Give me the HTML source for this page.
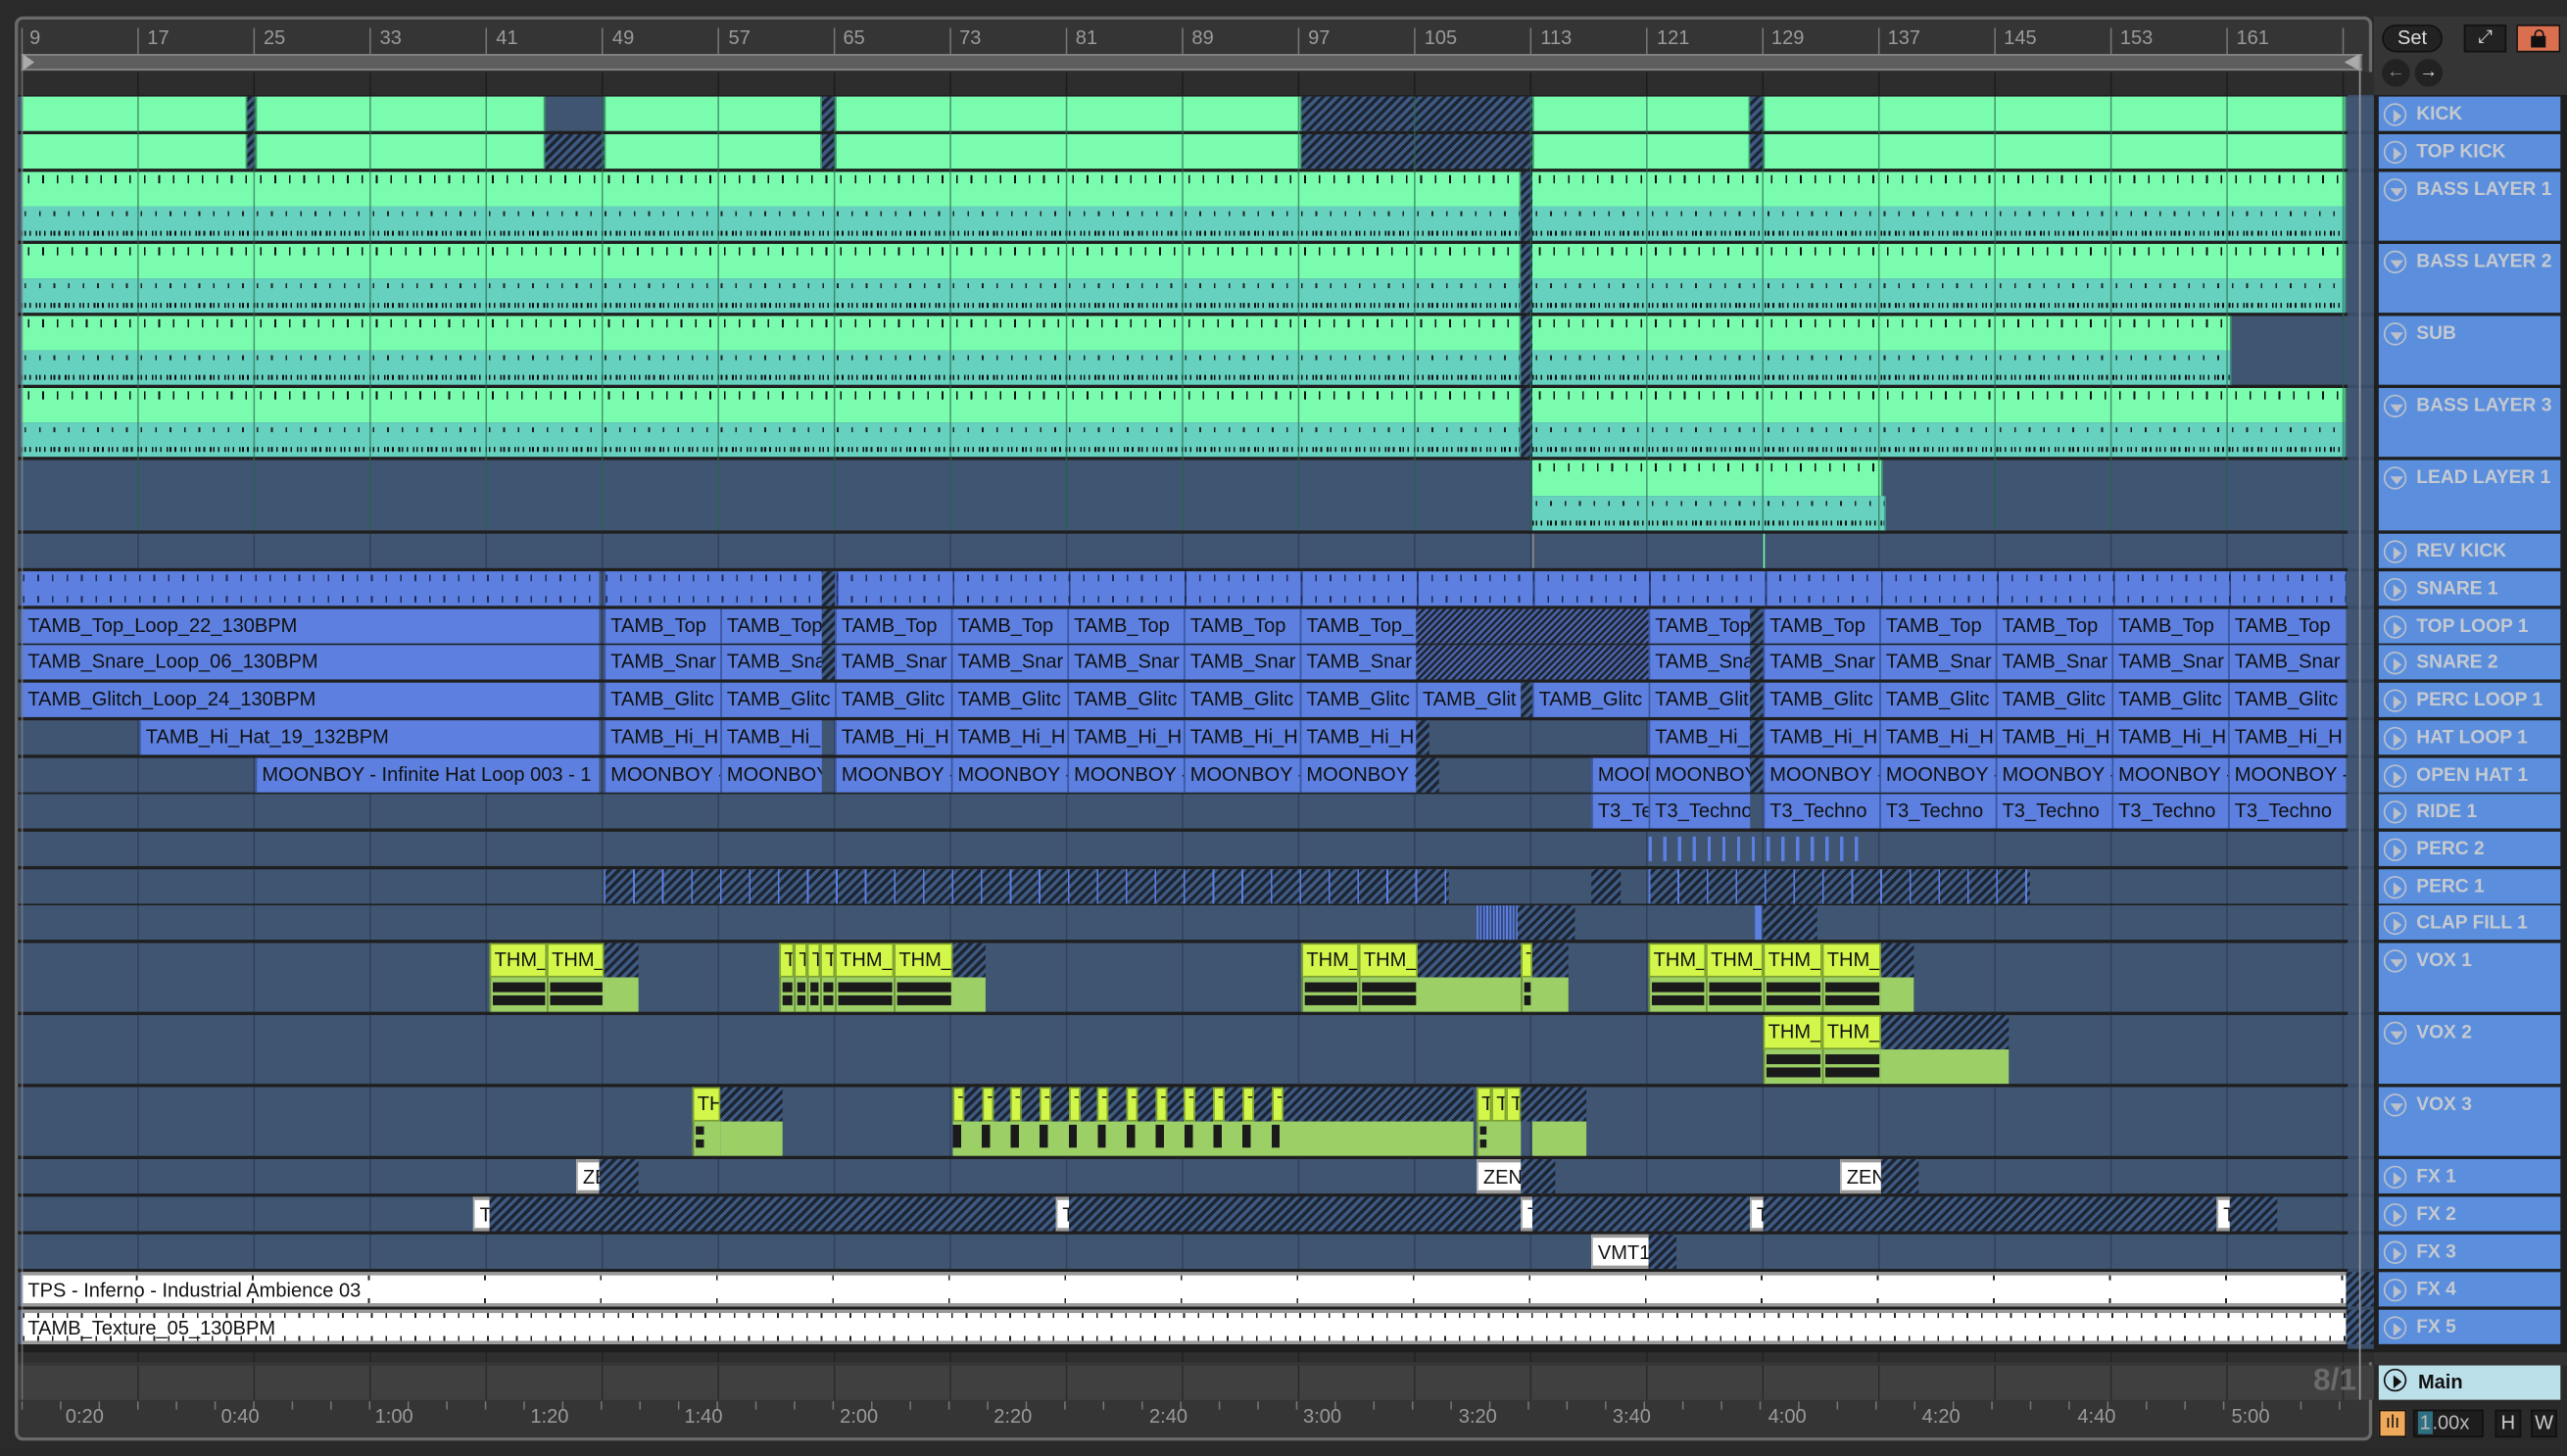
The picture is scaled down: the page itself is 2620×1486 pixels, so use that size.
<!DOCTYPE html>
<html><head><meta charset="utf-8">
<style>
html,body{margin:0;padding:0;background:#2a2a2a;width:2620px;height:1486px;overflow:hidden}
#w{position:absolute;left:0;top:0;width:1568px;height:889px;transform:scale(1.67092);transform-origin:0 0;font-family:"Liberation Sans",sans-serif;background:#2a2a2a}
.a{position:absolute;box-sizing:border-box;overflow:hidden;white-space:nowrap}
.t{position:absolute;left:11px;width:1439px;background-color:#405572;background-image:linear-gradient(90deg,rgba(20,30,45,.35) 1px,transparent 1px);background-size:70.9px 100%;background-position:2px 0}
.g{background:#7afcae;border-right:1px solid #3f9c6c;border-left:1px solid #3f9c6c}
.h{background:repeating-linear-gradient(-45deg,#1d2533 0 2px,#3e5a82 2px 4px)}
.hd{background:repeating-linear-gradient(-45deg,#1d2533 0 1.5px,#4a63a8 1.5px 3px)}
.b{background:#5c7fe0;border-left:1px solid #3c55a0;font-size:12px;color:#111;line-height:21px;padding-left:3px}
.tb{top:0;height:100%}
.gt{background:#7afcae;height:50%;top:0;border-right:1px solid #3f9c6c;background-image:repeating-linear-gradient(90deg,#111 0 1px,transparent 1px 8.86px);background-size:100% 5px;background-repeat:no-repeat;background-position:4px 2px}
.tl{background:#66d1bf;height:50%;top:50%;border-right:1px solid #3d8f86;background-image:repeating-linear-gradient(90deg,#222 0 1px,transparent 1px 8.86px),repeating-linear-gradient(90deg,#111 0 1px,transparent 1px 2px,#111 2px 3px,transparent 3px 5px,#111 5px 6px,transparent 6px 8.86px);background-size:100% 3px,100% 3px;background-repeat:no-repeat;background-position:2px 3px,0 15px}
.v{background:#d3f64b;height:50%;top:0;border:1px solid #7da230;font-size:12px;line-height:19px;padding-left:2px;color:#111}
.vb{background:#9ccf66;height:50%;top:50%;border-left:1px solid #6a8f3b;background-image:linear-gradient(#1a1a1a,#1a1a1a),linear-gradient(#1a1a1a,#1a1a1a);background-size:calc(100% - 2px) 6px,calc(100% - 2px) 6px;background-position:1px 3px,1px 11px;background-repeat:no-repeat}
.vg{background:#9ccf66;height:50%;top:50%}
.wc{background:#fff;border-top:2px solid #999;border-bottom:2px solid #999;border-left:1px solid #aaa;font-size:12px;line-height:18px;color:#111;padding-left:3px}
.lab{position:absolute;left:1453px;width:111px;background:#5b8fdd;color:#c4c9d1;font-weight:bold;font-size:11.5px;box-sizing:border-box;padding-left:23px;line-height:22px}
.lab:before{content:"";position:absolute;left:3px;top:4px;width:12px;height:12px;border:1.5px solid #b9c0cc;border-radius:50%}
.lab.p:after{content:"";position:absolute;left:9px;top:8px;border-left:5px solid #b9c0cc;border-top:4px solid transparent;border-bottom:4px solid transparent}
.lab.d:after{content:"";position:absolute;left:6.5px;top:10px;border-top:5px solid #b9c0cc;border-left:4px solid transparent;border-right:4px solid transparent}
.rn{position:absolute;top:16px;font-size:12px;color:#9a9a9a}
.tm{position:absolute;top:858px;font-size:12px;color:#9a9a9a}
</style></head><body><div id="w">
<div class="a" style="left:9px;top:10px;width:1440px;height:870px;border:2px solid #6a6a6a;border-radius:5px;background:#353535"></div>
<div class="a" style="left:13px;top:33px;width:1430px;height:10px;background:#5e5e5e;border-top:1px solid #888;border-bottom:1px solid #888"></div>
<div class="a" style="left:13px;top:44px;width:1436px;height:14px;background:#2d2d2d;background-image:linear-gradient(90deg,#1c1c1c 1px,transparent 1px);background-size:70.9px 100%;background-position:0 0"></div>
<div class="rn" style="left:18px">9</div><div class="rn" style="left:90px">17</div><div class="rn" style="left:161px">25</div><div class="rn" style="left:232px">33</div><div class="rn" style="left:303px">41</div><div class="rn" style="left:374px">49</div><div class="rn" style="left:445px">57</div><div class="rn" style="left:515px">65</div><div class="rn" style="left:586px">73</div><div class="rn" style="left:657px">81</div><div class="rn" style="left:728px">89</div><div class="rn" style="left:799px">97</div><div class="rn" style="left:870px">105</div><div class="rn" style="left:941px">113</div><div class="rn" style="left:1012px">121</div><div class="rn" style="left:1082px">129</div><div class="rn" style="left:1153px">137</div><div class="rn" style="left:1224px">145</div><div class="rn" style="left:1295px">153</div><div class="rn" style="left:1366px">161</div>
<div class="a" style="left:13px;top:17px;width:1430px;height:16px;background-image:linear-gradient(90deg,#888 1px,transparent 1px);background-size:70.9px 100%;opacity:.8"></div>
<div class="a" style="left:1432px;top:33px;width:0;height:0;border-right:9px solid #aaa;border-top:5px solid transparent;border-bottom:5px solid transparent"></div>
<div class="a" style="left:14px;top:33px;width:0;height:0;border-left:7px solid #aaa;border-top:5px solid transparent;border-bottom:5px solid transparent"></div>
<div class="a" style="left:1450px;top:10px;width:118px;height:48px;background:#353535"></div>
<div class="a" style="left:1455px;top:15px;width:37px;height:17px;border-radius:9px;background:#222;border:1px solid #111;color:#ddd;font-size:12px;text-align:center;line-height:15px">Set</div>
<div class="a" style="left:1505px;top:15px;width:26px;height:17px;background:#222;border:1px solid #111;color:#ddd;font-size:11px;text-align:center;line-height:15px">⤢</div>
<div class="a" style="left:1537px;top:15px;width:27px;height:17px;background:#d96f4e;border:1px solid #111"><div class="a" style="left:8px;top:6px;width:9px;height:7px;background:#111"></div><div class="a" style="left:9.5px;top:2px;width:6px;height:6px;border:1.5px solid #111;border-radius:4px 4px 0 0"></div></div>
<div class="a" style="left:1455px;top:36px;width:17px;height:17px;border-radius:50%;background:#222;color:#888;font-size:11px;text-align:center;line-height:17px">←</div>
<div class="a" style="left:1475px;top:36px;width:17px;height:17px;border-radius:50%;background:#222;color:#ddd;font-size:11px;text-align:center;line-height:17px">→</div>
<div class="a" style="left:11px;top:58px;width:1557px;height:766px;background:#1f1f1f"></div>
<div class="a" style="left:1434px;top:58px;width:16px;height:766px;background:#3a4d68"></div>

<div class="t" style="top:59px;height:21px">
<div class="a g tb" style="left:2px;width:138px"></div><div class="a h tb" style="left:140px;width:5px"></div>
<div class="a g tb" style="left:145px;width:177px"></div>
<div class="a g tb" style="left:358px;width:133px"></div><div class="a h tb" style="left:491px;width:8px"></div>
<div class="a g tb" style="left:499px;width:285px"></div><div class="a h tb" style="left:784px;width:141px"></div>
<div class="a g tb" style="left:925px;width:133px"></div><div class="a h tb" style="left:1058px;width:8px"></div>
<div class="a g tb" style="left:1066px;width:356px"></div></div>
<div class="t" style="top:82px;height:21px">
<div class="a g tb" style="left:2px;width:138px"></div><div class="a h tb" style="left:140px;width:5px"></div>
<div class="a g tb" style="left:145px;width:177px"></div><div class="a h tb" style="left:322px;width:36px"></div>
<div class="a g tb" style="left:358px;width:133px"></div><div class="a h tb" style="left:491px;width:8px"></div>
<div class="a g tb" style="left:499px;width:285px"></div><div class="a h tb" style="left:784px;width:141px"></div>
<div class="a g tb" style="left:925px;width:133px"></div><div class="a h tb" style="left:1058px;width:8px"></div>
<div class="a g tb" style="left:1066px;width:356px"></div></div>
<div class="t" style="top:105px;height:42px"><div class="a gt" style="left:2px;width:916px"></div><div class="a tl" style="left:2px;width:916px"></div><div class="a h tb" style="left:918px;width:7px"></div><div class="a gt" style="left:925px;width:497px"></div><div class="a tl" style="left:925px;width:497px"></div></div>
<div class="t" style="top:149px;height:42px"><div class="a gt" style="left:2px;width:916px"></div><div class="a tl" style="left:2px;width:916px"></div><div class="a h tb" style="left:918px;width:7px"></div><div class="a gt" style="left:925px;width:497px"></div><div class="a tl" style="left:925px;width:497px"></div></div>
<div class="t" style="top:193px;height:42px"><div class="a gt" style="left:2px;width:916px"></div><div class="a tl" style="left:2px;width:916px"></div><div class="a h tb" style="left:918px;width:7px"></div><div class="a gt" style="left:925px;width:427px"></div><div class="a tl" style="left:925px;width:427px"></div></div>
<div class="t" style="top:237px;height:42px"><div class="a gt" style="left:2px;width:916px"></div><div class="a tl" style="left:2px;width:916px"></div><div class="a h tb" style="left:918px;width:7px"></div><div class="a gt" style="left:925px;width:497px"></div><div class="a tl" style="left:925px;width:497px"></div></div>
<div class="t" style="top:281px;height:43px"><div class="a gt" style="left:925px;width:214px"></div><div class="a tl" style="left:925px;width:216px"></div></div>
<!-- bar lines overlay for green rows -->
<div class="a" style="left:13px;top:59px;width:1420px;height:265px;background-image:linear-gradient(90deg,rgba(40,110,80,.7) 1px,transparent 1px);background-size:70.9px 100%;background-position:0 0;pointer-events:none"></div>
<div class="t" style="top:326px;height:21px"><div class="a" style="left:925px;top:0;width:1px;height:21px;background:#888"></div><div class="a" style="left:1066px;top:0;width:1px;height:21px;background:#7afcae"></div></div>
<div class="t" style="top:349px;height:21px">
<div class="a b tb" style="left:2px;width:353px;background-image:repeating-linear-gradient(90deg,#1c2a55 0 1px,transparent 1px 8.86px),repeating-linear-gradient(90deg,#1c2a55 0 1px,transparent 1px 8.86px);background-size:100% 4px,100% 4px;background-repeat:no-repeat;background-position:0 2px,0 15px"></div>
<div class="a b tb" style="left:358px;width:133px;background-image:repeating-linear-gradient(90deg,#1c2a55 0 1px,transparent 1px 8.86px),repeating-linear-gradient(90deg,#1c2a55 0 1px,transparent 1px 8.86px);background-size:100% 4px,100% 4px;background-repeat:no-repeat;background-position:0 2px,0 15px"></div>
<div class="a h tb" style="left:491px;width:8px"></div>
<div class="a b tb" style="left:499px;width:923px;background-image:repeating-linear-gradient(90deg,#1c2a55 0 1px,transparent 1px 8.86px),repeating-linear-gradient(90deg,#1c2a55 0 1px,transparent 1px 8.86px),repeating-linear-gradient(90deg,#2c3f7a 0 1px,transparent 1px 70.9px);background-size:100% 4px,100% 4px,100% 100%;background-repeat:no-repeat;background-position:0 2px,0 15px,0 0"></div></div>
<div class="t" style="top:372px;height:21px">
<div class="a b tb" style="left:2px;width:353px">TAMB_Top_Loop_22_130BPM</div>
<div class="a b tb" style="left:358px;width:71px">TAMB_Top</div><div class="a b tb" style="left:429px;width:62px">TAMB_Top</div><div class="a h tb" style="left:491px;width:8px"></div>
<div class="a b tb" style="left:499px;width:71px">TAMB_Top</div><div class="a b tb" style="left:570px;width:71px">TAMB_Top</div><div class="a b tb" style="left:641px;width:71px">TAMB_Top</div><div class="a b tb" style="left:712px;width:71px">TAMB_Top</div><div class="a b tb" style="left:783px;width:71px">TAMB_Top_</div>
<div class="a hd tb" style="left:854px;width:142px"></div>
<div class="a b tb" style="left:996px;width:62px">TAMB_Top</div><div class="a h tb" style="left:1058px;width:8px"></div>
<div class="a b tb" style="left:1066px;width:71px">TAMB_Top</div><div class="a b tb" style="left:1137px;width:71px">TAMB_Top</div><div class="a b tb" style="left:1208px;width:71px">TAMB_Top</div><div class="a b tb" style="left:1279px;width:71px">TAMB_Top</div><div class="a b tb" style="left:1350px;width:72px">TAMB_Top</div></div>
<div class="t" style="top:394px;height:21px">
<div class="a b tb" style="left:2px;width:353px">TAMB_Snare_Loop_06_130BPM</div>
<div class="a b tb" style="left:358px;width:71px">TAMB_Snar</div><div class="a b tb" style="left:429px;width:62px">TAMB_Sna</div><div class="a h tb" style="left:491px;width:8px"></div>
<div class="a b tb" style="left:499px;width:71px">TAMB_Snar</div><div class="a b tb" style="left:570px;width:71px">TAMB_Snar</div><div class="a b tb" style="left:641px;width:71px">TAMB_Snar</div><div class="a b tb" style="left:712px;width:71px">TAMB_Snar</div><div class="a b tb" style="left:783px;width:71px">TAMB_Snar</div>
<div class="a hd tb" style="left:854px;width:142px"></div>
<div class="a b tb" style="left:996px;width:62px">TAMB_Sna</div><div class="a h tb" style="left:1058px;width:8px"></div>
<div class="a b tb" style="left:1066px;width:71px">TAMB_Snar</div><div class="a b tb" style="left:1137px;width:71px">TAMB_Snar</div><div class="a b tb" style="left:1208px;width:71px">TAMB_Snar</div><div class="a b tb" style="left:1279px;width:71px">TAMB_Snar</div><div class="a b tb" style="left:1350px;width:72px">TAMB_Snar</div></div>
<div class="t" style="top:417px;height:21px">
<div class="a b tb" style="left:2px;width:353px">TAMB_Glitch_Loop_24_130BPM</div>
<div class="a b tb" style="left:358px;width:71px">TAMB_Glitc</div><div class="a b tb" style="left:429px;width:70px">TAMB_Glitc</div>
<div class="a b tb" style="left:499px;width:71px">TAMB_Glitc</div><div class="a b tb" style="left:570px;width:71px">TAMB_Glitc</div><div class="a b tb" style="left:641px;width:71px">TAMB_Glitc</div><div class="a b tb" style="left:712px;width:71px">TAMB_Glitc</div><div class="a b tb" style="left:783px;width:71px">TAMB_Glitc</div><div class="a b tb" style="left:854px;width:64px">TAMB_Glit</div>
<div class="a h tb" style="left:918px;width:7px"></div>
<div class="a b tb" style="left:925px;width:71px">TAMB_Glitc</div><div class="a b tb" style="left:996px;width:62px">TAMB_Glit</div><div class="a h tb" style="left:1058px;width:8px"></div>
<div class="a b tb" style="left:1066px;width:71px">TAMB_Glitc</div><div class="a b tb" style="left:1137px;width:71px">TAMB_Glitc</div><div class="a b tb" style="left:1208px;width:71px">TAMB_Glitc</div><div class="a b tb" style="left:1279px;width:71px">TAMB_Glitc</div><div class="a b tb" style="left:1350px;width:72px">TAMB_Glitc</div></div>
<div class="t" style="top:440px;height:21px">
<div class="a b tb" style="left:74px;width:281px">TAMB_Hi_Hat_19_132BPM</div>
<div class="a b tb" style="left:358px;width:71px">TAMB_Hi_H</div><div class="a b tb" style="left:429px;width:62px">TAMB_Hi_</div>
<div class="a b tb" style="left:499px;width:71px">TAMB_Hi_H</div><div class="a b tb" style="left:570px;width:71px">TAMB_Hi_H</div><div class="a b tb" style="left:641px;width:71px">TAMB_Hi_H</div><div class="a b tb" style="left:712px;width:71px">TAMB_Hi_H</div><div class="a b tb" style="left:783px;width:71px">TAMB_Hi_H</div><div class="a h tb" style="left:854px;width:8px"></div>
<div class="a b tb" style="left:996px;width:62px">TAMB_Hi_</div><div class="a h tb" style="left:1058px;width:8px"></div>
<div class="a b tb" style="left:1066px;width:71px">TAMB_Hi_H</div><div class="a b tb" style="left:1137px;width:71px">TAMB_Hi_H</div><div class="a b tb" style="left:1208px;width:71px">TAMB_Hi_H</div><div class="a b tb" style="left:1279px;width:71px">TAMB_Hi_H</div><div class="a b tb" style="left:1350px;width:72px">TAMB_Hi_H</div></div>
<div class="t" style="top:463px;height:21px">
<div class="a b tb" style="left:145px;width:210px">MOONBOY - Infinite Hat Loop 003 - 1</div>
<div class="a b tb" style="left:358px;width:71px">MOONBOY -</div><div class="a b tb" style="left:429px;width:62px">MOONBOY</div>
<div class="a b tb" style="left:499px;width:71px">MOONBOY -</div><div class="a b tb" style="left:570px;width:71px">MOONBOY -</div><div class="a b tb" style="left:641px;width:71px">MOONBOY -</div><div class="a b tb" style="left:712px;width:71px">MOONBOY -</div><div class="a b tb" style="left:783px;width:71px">MOONBOY -</div><div class="a h tb" style="left:854px;width:14px"></div>
<div class="a b tb" style="left:961px;width:35px">MOONBOY</div><div class="a b tb" style="left:996px;width:62px">MOONBOY</div><div class="a h tb" style="left:1058px;width:8px"></div>
<div class="a b tb" style="left:1066px;width:71px">MOONBOY -</div><div class="a b tb" style="left:1137px;width:71px">MOONBOY -</div><div class="a b tb" style="left:1208px;width:71px">MOONBOY -</div><div class="a b tb" style="left:1279px;width:71px">MOONBOY -</div><div class="a b tb" style="left:1350px;width:72px">MOONBOY -</div></div>
<div class="t" style="top:485px;height:21px">
<div class="a b tb" style="left:961px;width:35px">T3_Techno</div><div class="a b tb" style="left:996px;width:62px">T3_Techno</div>
<div class="a b tb" style="left:1066px;width:71px">T3_Techno</div><div class="a b tb" style="left:1137px;width:71px">T3_Techno</div><div class="a b tb" style="left:1208px;width:71px">T3_Techno</div><div class="a b tb" style="left:1279px;width:71px">T3_Techno</div><div class="a b tb" style="left:1350px;width:72px">T3_Techno</div></div>
<div class="t" style="top:508px;height:21px"><div class="a" style="left:996px;top:3px;width:128px;height:15px;background:repeating-linear-gradient(90deg,#5c7fe0 0 2px,transparent 2px 9px)"></div></div>
<div class="t" style="top:531px;height:21px"><div class="a h tb" style="left:358px;width:516px;background-image:repeating-linear-gradient(90deg,#5c7fe0 0 1px,transparent 1px 17.7px),repeating-linear-gradient(-45deg,#1d2533 0 2px,#3e5a82 2px 4px)"></div><div class="a h tb" style="left:961px;width:18px"></div><div class="a h tb" style="left:996px;width:233px;background-image:repeating-linear-gradient(90deg,#5c7fe0 0 1px,transparent 1px 17.7px),repeating-linear-gradient(-45deg,#1d2533 0 2px,#3e5a82 2px 4px)"></div></div>
<div class="t" style="top:553px;height:21px"><div class="a tb" style="left:891px;width:25px;background:repeating-linear-gradient(90deg,#5c7fe0 0 1px,#34487a 1px 2px)"></div><div class="a h tb" style="left:916px;width:35px"></div><div class="a h tb" style="left:1066px;width:33px"></div><div class="a tb" style="left:1061px;width:4px;background:#5c7fe0"></div></div>
<div class="t" style="top:576px;height:42px">
<div class="a v" style="left:288px;width:35px">THM_</div><div class="a vb" style="left:288px;width:35px"></div><div class="a v" style="left:323px;width:35px">THM_</div><div class="a vb" style="left:323px;width:35px"></div><div class="a h" style="left:358px;width:21px;top:0;height:50%"></div><div class="a vg" style="left:358px;width:21px"></div>
<div class="a v" style="left:465px;width:9px">T</div><div class="a vb" style="left:465px;width:9px"></div><div class="a v" style="left:474px;width:8px">T</div><div class="a vb" style="left:474px;width:8px"></div><div class="a v" style="left:482px;width:8px">T</div><div class="a vb" style="left:482px;width:8px"></div><div class="a v" style="left:490px;width:9px">T</div><div class="a vb" style="left:490px;width:9px"></div>
<div class="a v" style="left:499px;width:36px">THM_</div><div class="a vb" style="left:499px;width:36px"></div><div class="a v" style="left:535px;width:36px">THM_</div><div class="a vb" style="left:535px;width:36px"></div><div class="a h" style="left:571px;width:20px;top:0;height:50%"></div><div class="a vg" style="left:571px;width:20px"></div>
<div class="a v" style="left:784px;width:35px">THM_</div><div class="a vb" style="left:784px;width:35px"></div><div class="a v" style="left:819px;width:36px">THM_</div><div class="a vb" style="left:819px;width:36px"></div><div class="a h" style="left:855px;width:63px;top:0;height:50%"></div><div class="a vg" style="left:855px;width:63px"></div>
<div class="a v" style="left:918px;width:7px">T</div><div class="a vb" style="left:918px;width:7px"></div><div class="a h" style="left:925px;width:22px;top:0;height:50%"></div><div class="a vg" style="left:925px;width:22px"></div>
<div class="a v" style="left:996px;width:35px">THM_</div><div class="a vb" style="left:996px;width:35px"></div><div class="a v" style="left:1031px;width:35px">THM_</div><div class="a vb" style="left:1031px;width:35px"></div><div class="a v" style="left:1066px;width:36px">THM_</div><div class="a vb" style="left:1066px;width:36px"></div><div class="a v" style="left:1102px;width:36px">THM_</div><div class="a vb" style="left:1102px;width:36px"></div><div class="a h" style="left:1138px;width:20px;top:0;height:50%"></div><div class="a vg" style="left:1138px;width:20px"></div></div>
<div class="t" style="top:620px;height:42px">
<div class="a v" style="left:1066px;width:36px">THM_</div><div class="a vb" style="left:1066px;width:36px"></div><div class="a v" style="left:1102px;width:36px">THM_</div><div class="a vb" style="left:1102px;width:36px"></div><div class="a h" style="left:1138px;width:78px;top:0;height:50%"></div><div class="a vg" style="left:1138px;width:78px"></div></div>
<div class="t" style="top:664px;height:42px">
<div class="a v" style="left:412px;width:17px">TH</div><div class="a vb" style="left:412px;width:17px;background-size:5px 5px,5px 5px"></div><div class="a h" style="left:429px;width:38px;top:0;height:50%"></div><div class="a vg" style="left:429px;width:38px"></div>
<div class="a h" style="left:571px;width:318px;top:0;height:50%"></div><div class="a vg" style="left:571px;width:318px"></div>
<div class="a v" style="left:571px;width:7px">T</div><div class="a v" style="left:589px;width:7px">T</div><div class="a v" style="left:606px;width:7px">T</div><div class="a v" style="left:624px;width:7px">T</div><div class="a v" style="left:642px;width:7px">T</div><div class="a v" style="left:659px;width:7px">T</div><div class="a v" style="left:677px;width:7px">T</div><div class="a v" style="left:695px;width:7px">T</div><div class="a v" style="left:712px;width:7px">T</div><div class="a v" style="left:730px;width:7px">T</div><div class="a v" style="left:748px;width:7px">T</div><div class="a v" style="left:766px;width:7px">T</div>
<div class="a" style="left:571px;top:23px;width:202px;height:14px;background:repeating-linear-gradient(90deg,#1a1a1a 0 5px,transparent 5px 17.7px)"></div>
<div class="a v" style="left:891px;width:9px">T</div><div class="a v" style="left:900px;width:9px">T</div><div class="a v" style="left:909px;width:9px">T</div><div class="a vb" style="left:891px;width:27px;background-size:4px 5px,4px 5px"></div>
<div class="a h" style="left:918px;width:40px;top:0;height:50%"></div><div class="a vg" style="left:925px;width:33px"></div></div>
<div class="t" style="top:708px;height:21px"><div class="a wc tb" style="left:341px;width:14px">ZEN</div><div class="a h tb" style="left:355px;width:24px"></div><div class="a wc tb" style="left:891px;width:27px">ZEN</div><div class="a h tb" style="left:918px;width:21px"></div><div class="a wc tb" style="left:1113px;width:25px">ZEN</div><div class="a h tb" style="left:1138px;width:23px"></div></div>
<div class="t" style="top:731px;height:21px"><div class="a wc tb" style="left:278px;width:10px">T</div><div class="a h tb" style="left:288px;width:346px"></div><div class="a wc tb" style="left:634px;width:8px">T</div><div class="a h tb" style="left:642px;width:276px"></div><div class="a wc tb" style="left:918px;width:7px">T</div><div class="a h tb" style="left:925px;width:133px"></div><div class="a wc tb" style="left:1058px;width:8px">T</div><div class="a h tb" style="left:1066px;width:277px"></div><div class="a wc tb" style="left:1343px;width:8px">T</div><div class="a h tb" style="left:1351px;width:29px"></div></div>
<div class="t" style="top:754px;height:21px"><div class="a wc tb" style="left:961px;width:35px">VMT1</div><div class="a h tb" style="left:996px;width:17px"></div></div>
<div class="t" style="top:777px;height:21px"><div class="a wc tb" style="left:2px;width:1420px;background-image:repeating-linear-gradient(90deg,#222 0 1px,transparent 1px 70.9px),repeating-linear-gradient(90deg,#222 0 1px,transparent 1px 70.9px);background-size:100% 3px,100% 3px;background-repeat:no-repeat;background-position:69px 0,69px 14px">TPS - Inferno - Industrial Ambience 03</div><div class="a h tb" style="left:1422px;width:17px"></div></div>
<div class="t" style="top:800px;height:21px"><div class="a wc tb" style="left:2px;width:1420px;background-image:repeating-linear-gradient(90deg,#222 0 1px,transparent 1px 8.86px),repeating-linear-gradient(90deg,#222 0 1px,transparent 1px 8.86px);background-size:100% 3px,100% 3px;background-repeat:no-repeat;background-position:0 0,0 14px">TAMB_Texture_05_130BPM</div><div class="a h tb" style="left:1422px;width:17px"></div></div>
<div class="a" style="left:11px;top:824px;width:1439px;height:8px;background:#2f2f2f;background-image:linear-gradient(90deg,#222 1px,transparent 1px);background-size:70.9px 100%;background-position:2px 0"></div>
<div class="a" style="left:11px;top:834px;width:1439px;height:21px;background:#404040;background-image:linear-gradient(90deg,#2a2a2a 1px,transparent 1px);background-size:70.9px 100%;background-position:2px 0"></div>
<div class="a" style="left:1413px;top:833px;font-size:19px;font-weight:bold;color:#6a6a6a">8/1</div>
<div class="a" style="left:11px;top:824px;width:1557px;height:2px;background:#1f1f1f"></div>
<div class="a" style="left:1450px;top:826px;width:118px;height:8px;background:#333"></div>
<div class="a" style="left:1453px;top:834px;width:111px;height:21px;background:#bce0ea;color:#111;font-weight:bold;font-size:12px;line-height:21px;padding-left:24px">Main</div>
<div class="a" style="left:1456px;top:836px;width:14px;height:14px;border:1.5px solid #111;border-radius:50%"></div>
<div class="a" style="left:1462px;top:840px;border-left:5px solid #111;border-top:4px solid transparent;border-bottom:4px solid transparent"></div>
<div class="a" style="left:13px;top:856px;width:1430px;height:5px;background-image:linear-gradient(90deg,#777 1px,transparent 1px);background-size:23.6px 100%;background-position:0 0"></div>
<div class="tm" style="left:40px">0:20</div><div class="tm" style="left:135px">0:40</div><div class="tm" style="left:229px">1:00</div><div class="tm" style="left:324px">1:20</div><div class="tm" style="left:418px">1:40</div><div class="tm" style="left:513px">2:00</div><div class="tm" style="left:607px">2:20</div><div class="tm" style="left:702px">2:40</div><div class="tm" style="left:796px">3:00</div><div class="tm" style="left:891px">3:20</div><div class="tm" style="left:985px">3:40</div><div class="tm" style="left:1080px">4:00</div><div class="tm" style="left:1174px">4:20</div><div class="tm" style="left:1269px">4:40</div><div class="tm" style="left:1363px">5:00</div>
<div class="a" style="left:1453px;top:861px;width:17px;height:17px;background:#f0a95a;border:1px solid #111;font-size:11px;text-align:center;line-height:15px;color:#111">ılı</div>
<div class="a" style="left:1474px;top:861px;width:43px;height:17px;background:#1d1d1d;border:1px solid #111;color:#bbb;font-size:12px;line-height:15px;padding-left:2px"><span style="background:#2f6f82;padding:0 1px">1</span>.00x</div>
<div class="a" style="left:1524px;top:861px;width:16px;height:17px;background:#1d1d1d;border:1px solid #111;color:#ccc;font-size:12px;line-height:15px;text-align:center">H</div>
<div class="a" style="left:1546px;top:861px;width:16px;height:17px;background:#1d1d1d;border:1px solid #111;color:#ccc;font-size:12px;line-height:15px;text-align:center">W</div>
<div class="a" style="left:1441px;top:33px;width:1px;height:822px;background:#999"></div>
<div class="a" style="left:13px;top:33px;width:1px;height:822px;background:#999;opacity:.6"></div>
<div class="lab p" style="top:59px;height:21px">KICK</div>
<div class="lab p" style="top:82px;height:21px">TOP KICK</div>
<div class="lab d" style="top:105px;height:42px">BASS LAYER 1</div>
<div class="lab d" style="top:149px;height:42px">BASS LAYER 2</div>
<div class="lab d" style="top:193px;height:42px">SUB</div>
<div class="lab d" style="top:237px;height:42px">BASS LAYER 3</div>
<div class="lab d" style="top:281px;height:43px">LEAD LAYER 1</div>
<div class="lab p" style="top:326px;height:21px">REV KICK</div>
<div class="lab p" style="top:349px;height:21px">SNARE 1</div>
<div class="lab p" style="top:372px;height:21px">TOP LOOP 1</div>
<div class="lab p" style="top:394px;height:21px">SNARE 2</div>
<div class="lab p" style="top:417px;height:21px">PERC LOOP 1</div>
<div class="lab p" style="top:440px;height:21px">HAT LOOP 1</div>
<div class="lab p" style="top:463px;height:21px">OPEN HAT 1</div>
<div class="lab p" style="top:485px;height:21px">RIDE 1</div>
<div class="lab p" style="top:508px;height:21px">PERC 2</div>
<div class="lab p" style="top:531px;height:21px">PERC 1</div>
<div class="lab p" style="top:553px;height:21px">CLAP FILL 1</div>
<div class="lab d" style="top:576px;height:42px">VOX 1</div>
<div class="lab d" style="top:620px;height:42px">VOX 2</div>
<div class="lab d" style="top:664px;height:42px">VOX 3</div>
<div class="lab p" style="top:708px;height:21px">FX 1</div>
<div class="lab p" style="top:731px;height:21px">FX 2</div>
<div class="lab p" style="top:754px;height:21px">FX 3</div>
<div class="lab p" style="top:777px;height:21px">FX 4</div>
<div class="lab p" style="top:800px;height:21px">FX 5</div>
<div class="a" style="left:0;top:880px;width:1568px;height:9px;background:#2a2a2a"></div>
</div></body></html>
